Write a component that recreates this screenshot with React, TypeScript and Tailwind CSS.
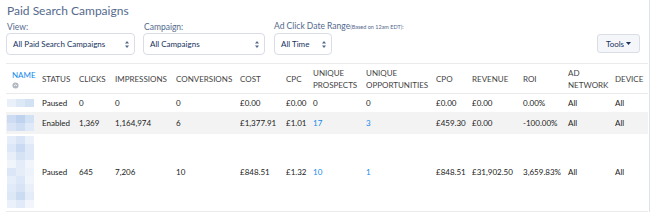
import React from 'react';

const cols = [
  { key: 'name', label: 'NAME', w: 30 },
  { key: 'status', label: 'STATUS', w: 37 },
  { key: 'clicks', label: 'CLICKS', w: 36 },
  { key: 'impressions', label: 'IMPRESSIONS', w: 61 },
  { key: 'conversions', label: 'CONVERSIONS', w: 64 },
  { key: 'cost', label: 'COST', w: 46 },
  { key: 'cpc', label: 'CPC', w: 27 },
  { key: 'prospects', label: 'UNIQUE PROSPECTS', w: 53 },
  { key: 'opps', label: 'UNIQUE OPPORTUNITIES', w: 70 },
  { key: 'cpo', label: 'CPO', w: 36 },
  { key: 'revenue', label: 'REVENUE', w: 51 },
  { key: 'roi', label: 'ROI', w: 45 },
  { key: 'network', label: 'AD NETWORK', w: 47 },
  { key: 'device', label: 'DEVICE', w: 39 },
];

interface Row {
  status: string;
  clicks: string;
  impressions: string;
  conversions: string;
  cost: string;
  cpc: string;
  prospects: string;
  opps: string;
  cpo: string;
  revenue: string;
  roi: string;
  network: string;
  device: string;
  blocks: string[][];
  h: string;
  bg: string;
}

const rows: Row[] = [
  {
    status: 'Paused', clicks: '0', impressions: '0', conversions: '0', cost: '£0.00', cpc: '£0.00',
    prospects: '0', opps: '0', cpo: '£0.00', revenue: '£0.00', roi: '0.00%', network: 'All', device: 'All',
    blocks: [['#e9f0fa', '#dde8f7', '#d3e1f4']],
    h: 'h-[18px]', bg: 'bg-white',
  },
  {
    status: 'Enabled', clicks: '1,369', impressions: '1,164,974', conversions: '6', cost: '£1,377.91', cpc: '£1.01',
    prospects: '17', opps: '3', cpo: '£459.30', revenue: '£0.00', roi: '-100.00%', network: 'All', device: 'All',
    blocks: [['#cddcf2', '#bfd3ef', '#d3e1f4'], ['#d9e5f6', '#d0def3', '#e0e9f8']],
    h: 'h-[22px]', bg: 'bg-[#f3f3f3]',
  },
  {
    status: 'Paused', clicks: '645', impressions: '7,206', conversions: '10', cost: '£848.51', cpc: '£1.32',
    prospects: '10', opps: '1', cpo: '£848.51', revenue: '£31,902.50', roi: '3,659.83%', network: 'All', device: 'All',
    blocks: [
      ['#e4edf9', '#d9e5f6', '#eaf1fa'],
      ['#dce7f7', '#c9daf2', '#e0e9f8'],
      ['#e8eff9', '#d6e3f5', '#dfe9f7'],
      ['#f0f5fb', '#e3ecf8', '#f2f6fc'],
      ['#dbe6f6', '#e5edf9', '#eef3fb'],
      ['#e6eef9', '#dce7f7', '#f0f5fb'],
      ['#e1eaf8', '#d8e4f6', '#e9f0fa'],
      ['#dde8f7', '#cbdbf2', '#e3ecf8'],
      ['#eaf1fa', '#e1eaf8', '#f2f6fc'],
    ],
    h: 'h-[78px]', bg: 'bg-white',
  },
];

const links = new Set(['prospects', 'opps']);

function SelectBox({ text, w }: { text: string; w: string }) {
  return (
    <div className={`${w} h-[22px] flex items-center justify-between rounded-[4px] border border-[#d8dde6] bg-white pl-[6px] pr-[5px] text-[8px] text-[#16325c] whitespace-nowrap`}>
      <span>{text}</span>
      <svg width="4" height="7" viewBox="0 0 4 7" className="text-[#54698d]">
        <path d="M2 0 L4 2.6 L0 2.6 Z" fill="currentColor" />
        <path d="M2 7 L4 4.4 L0 4.4 Z" fill="currentColor" />
      </svg>
    </div>
  );
}

export default function App() {
  return (
    <div className="w-[650px] h-[212px] overflow-hidden bg-white font-['Lato','Open_Sans',sans-serif] border-r border-[#dfe3ea]">
      <div className="pl-[7px] pt-[1px] text-[12px] leading-[20px] text-[#54698d]">Paid Search Campaigns</div>

      <div className="flex items-end pl-[6px] pr-[9px]">
        <div className="flex flex-col">
          <span className="text-[8.5px] leading-[11px] text-[#54698d] pl-[1px]">View:</span>
          <SelectBox text="All Paid Search Campaigns" w="w-[129px]" />
        </div>
        <div className="flex flex-col ml-[8px]">
          <span className="text-[8.5px] leading-[11px] text-[#54698d] pl-[1px]">Campaign:</span>
          <SelectBox text="All Campaigns" w="w-[122px]" />
        </div>
        <div className="flex flex-col ml-[9px]">
          <span className="text-[8.5px] leading-[11px] text-[#54698d] whitespace-nowrap">
            Ad Click Date Range<span className="text-[5.5px]">(Based on 12am EDT):</span>
          </span>
          <SelectBox text="All Time" w="w-[58px]" />
        </div>
        <div className="ml-auto mb-[2px] h-[19px] w-[43px] flex items-center justify-center gap-[2px] rounded-[3px] border border-[#d8dde6] bg-[#f4f6f9] text-[8px] text-[#16325c]">
          Tools
          <svg width="5" height="3" viewBox="0 0 5 3">
            <path d="M0 0 L5 0 L2.5 3 Z" fill="#16325c" />
          </svg>
        </div>
      </div>

      <table className="table-fixed border-collapse ml-[6px] mt-[8px] w-[642px] text-[8px] text-[#222222]">
        <colgroup>
          {cols.map((c) => (
            <col key={c.key} style={{ width: c.w }} />
          ))}
        </colgroup>
        <thead>
          <tr className="h-[30px] border-t border-b border-[#eaeaea]">
            {cols.map((c) =>
              c.key === 'name' ? (
                <th key={c.key} className="pl-[6px] text-left font-normal align-middle">
                  <div className="text-[#1589ee] leading-[10px] mt-[2px]">NAME</div>
                  <svg width="7" height="7" viewBox="0 0 8 8" className="mt-[2px]">
                    <circle cx="4" cy="4" r="3.5" fill="#b3b9c2" />
                    <path d="M2.4 4.6 L4 3 L5.6 4.6" stroke="#fff" strokeWidth="1" fill="none" />
                  </svg>
                </th>
              ) : (
                <th key={c.key} className="pl-[6px] text-left font-normal align-middle leading-[12px] text-[#444444]">
                  {c.label}
                </th>
              )
            )}
          </tr>
        </thead>
        <tbody>
          {rows.map((r, i) => (
            <tr key={i} className={`${r.h} ${r.bg} ${i === rows.length - 1 ? 'border-b border-[#eaeaea]' : ''}`}>
              <td className="pl-[1px] align-middle">
                <div className="flex flex-col">
                  {r.blocks.map((line, j) => (
                    <div key={j} className="flex">
                      {line.map((color, k) => (
                        <div key={k} className="w-[9px] h-[8px]" style={{ background: color }} />
                      ))}
                    </div>
                  ))}
                </div>
              </td>
              {cols.slice(1).map((c) => (
                <td
                  key={c.key}
                  className={`pl-[6px] align-middle whitespace-nowrap ${links.has(c.key) && (r as any)[c.key] !== '0' ? 'text-[#1589ee]' : ''}`}
                >
                  {(r as any)[c.key]}
                </td>
              ))}
            </tr>
          ))}
        </tbody>
      </table>
    </div>
  );
}
